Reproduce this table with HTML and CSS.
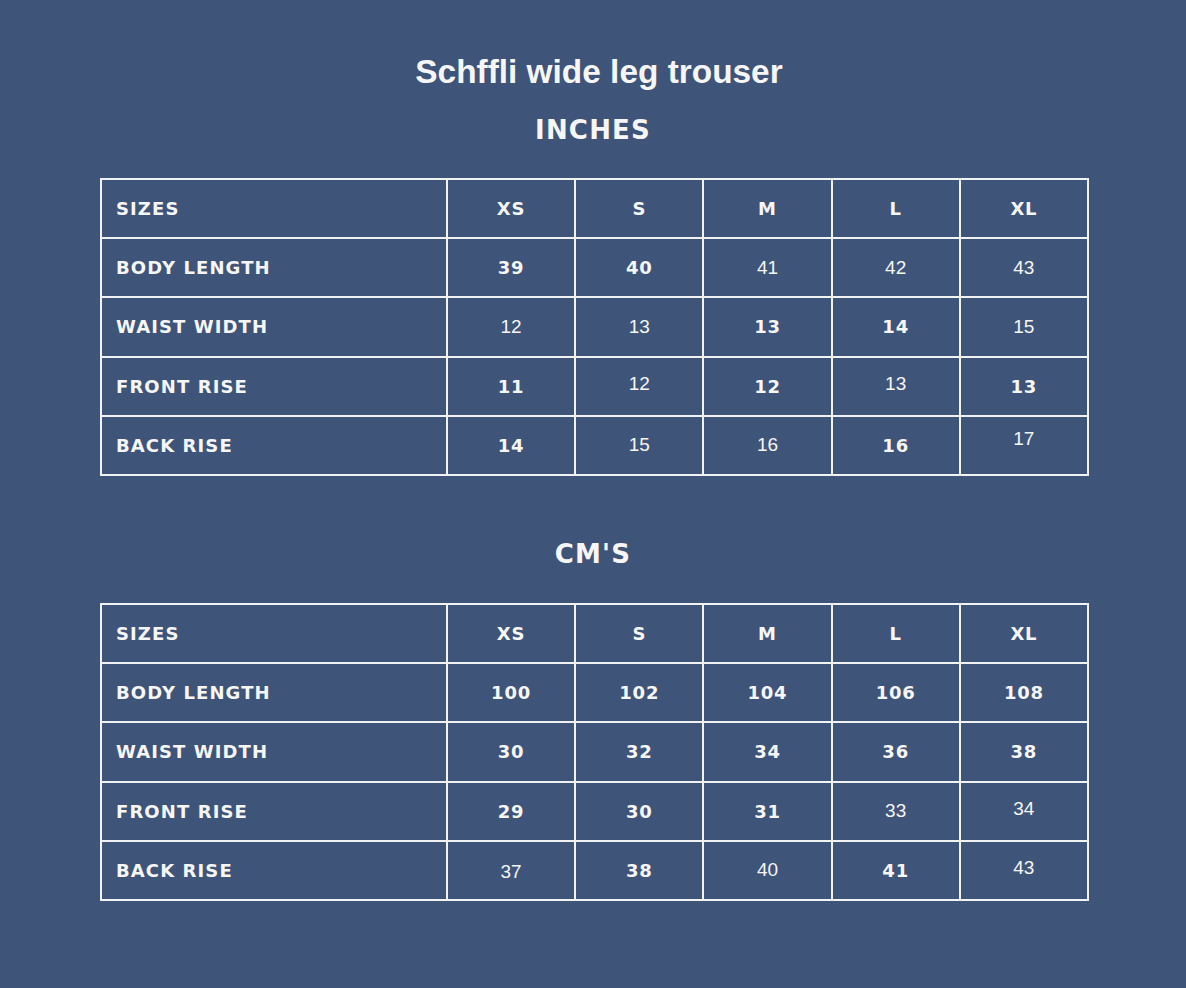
FILE: index.html
```html
<!DOCTYPE html>
<html>
<head>
<meta charset="utf-8">
<link rel="stylesheet" href="styles.css">
</head>
<body>
<main class="page">
  <h1 class="title">Schffli wide leg trouser</h1>
  <h2 class="unit unit-in">INCHES</h2>
  <table class="chart">
    <colgroup><col class="c-label"><col><col><col><col><col></colgroup>
    <tr><th>SIZES</th><td class="b">XS</td><td class="b">S</td><td class="b">M</td><td class="b">L</td><td class="b">XL</td></tr>
    <tr><th>BODY LENGTH</th><td class="b">39</td><td class="b">40</td><td class="l">41</td><td class="l">42</td><td class="l">43</td></tr>
    <tr><th>WAIST WIDTH</th><td class="l">12</td><td class="l">13</td><td class="b">13</td><td class="b">14</td><td class="l">15</td></tr>
    <tr><th>FRONT RISE</th><td class="b">11</td><td class="l hi">12</td><td class="b">12</td><td class="l hi">13</td><td class="b">13</td></tr>
    <tr><th>BACK RISE</th><td class="b">14</td><td class="l">15</td><td class="l">16</td><td class="b">16</td><td class="l hi2">17</td></tr>
  </table>
  <h2 class="unit unit-cm">CM'S</h2>
  <table class="chart">
    <colgroup><col class="c-label"><col><col><col><col><col></colgroup>
    <tr><th>SIZES</th><td class="b">XS</td><td class="b">S</td><td class="b">M</td><td class="b">L</td><td class="b">XL</td></tr>
    <tr><th>BODY LENGTH</th><td class="b">100</td><td class="b">102</td><td class="b">104</td><td class="b">106</td><td class="b">108</td></tr>
    <tr><th>WAIST WIDTH</th><td class="b">30</td><td class="b">32</td><td class="b">34</td><td class="b">36</td><td class="b">38</td></tr>
    <tr><th>FRONT RISE</th><td class="b">29</td><td class="b">30</td><td class="b">31</td><td class="l">33</td><td class="l hi">34</td></tr>
    <tr><th>BACK RISE</th><td class="l lo">37</td><td class="b">38</td><td class="l">40</td><td class="b">41</td><td class="l hi">43</td></tr>
  </table>
</main>
</body>
</html>
```

FILE: styles.css
```css
html, body {
  margin: 0;
  padding: 0;
  background: #3f5479;
}
body {
  width: 1186px;
  height: 988px;
  overflow: hidden;
  color: #f6f6f6;
}
.page {
  padding-top: 52px;
  display: flex;
  flex-direction: column;
  align-items: flex-start;
}
.title {
  align-self: stretch;
  margin: 0;
  font-family: "Liberation Sans", Arial, sans-serif;
  font-weight: 700;
  font-size: 33.4px;
  line-height: 40px;
  text-align: center;
  padding-left: 12px;
}
.unit {
  align-self: stretch;
  margin: 0;
  font-family: "DejaVu Sans", Verdana, sans-serif;
  font-weight: 700;
  font-size: 26px;
  line-height: 30px;
  text-align: center;
  letter-spacing: 1.2px;
}
.unit-in { margin-top: 23px; margin-bottom: 33px; }
.unit-cm { margin-top: 63px; margin-bottom: 34px; }
.chart {
  margin-left: 100px;
  width: 989px;
  table-layout: fixed;
  border-collapse: collapse;
}
.c-label { width: 346px; }
.chart tr { height: 59.2px; }
.chart th, .chart td {
  border: 2px solid #f2f2f2;
  padding: 0;
  vertical-align: middle;
}
.chart th {
  text-align: left;
  padding-left: 14px;
  font-family: "DejaVu Sans", Verdana, sans-serif;
  font-weight: 700;
  font-size: 18px;
  letter-spacing: 1.1px;
}
.chart td { text-align: center; }
.chart td.b {
  font-family: "DejaVu Sans", Verdana, sans-serif;
  font-weight: 700;
  font-size: 18px;
  letter-spacing: 0.8px;
}
.chart td.l {
  font-family: "Liberation Sans", Arial, sans-serif;
  font-weight: 400;
  font-size: 19px;
}
.chart td.hi { padding-bottom: 4px; }
.chart td.hi2 { padding-bottom: 12px; }
.chart td.lo { padding-top: 4px; }
```
